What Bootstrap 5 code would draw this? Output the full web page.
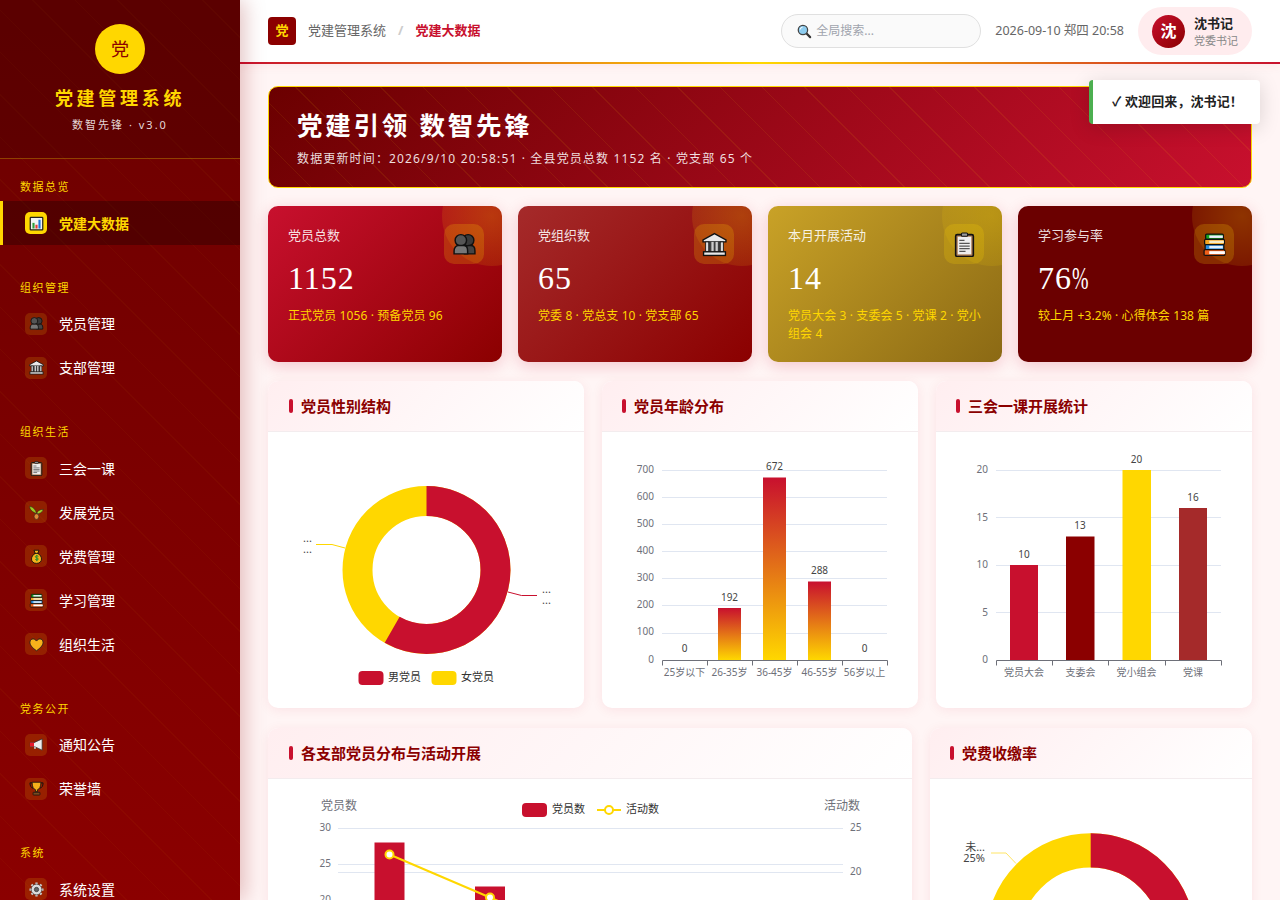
<!DOCTYPE html>
<html lang="zh-CN">
<head>
<meta charset="utf-8">
<title>党建管理系统</title>
<link href="https://cdn.jsdelivr.net/npm/bootstrap@5.3.0/dist/css/bootstrap.min.css" rel="stylesheet">
<script src="https://cdn.jsdelivr.net/npm/bootstrap@5.3.0/dist/js/bootstrap.bundle.min.js"></script>
<style>
html,body{height:900px;overflow:hidden}
body{font-family:"Noto Sans","Noto Sans CJK SC",sans-serif;background:#fff5f5;color:#333}
.shell{height:900px}
.side{width:240px;flex:none;height:900px;overflow:hidden;z-index:3;color:#fff;box-shadow:4px 0 20px rgba(139,0,0,.25);
 background:repeating-linear-gradient(45deg,transparent 0 29px,rgba(255,215,0,.03) 29px 30px),linear-gradient(180deg,#6b0000,#8b0000)}
.side-head{height:159px;background:rgba(0,0,0,.15);border-bottom:1px solid rgba(255,215,0,.3);padding-top:24px}
.side-logo{width:50px;height:50px;background:#ffd700;color:#8b0000;font-size:18px}
.side-title{color:#ffd700;font-size:18px;font-weight:700;letter-spacing:3.7px;margin-top:11px;line-height:26px}
.side-sub{color:rgba(255,255,255,.85);font-size:11px;letter-spacing:2px;margin-top:6px;line-height:16px}
.side-nav{padding-top:20px}
.side-group{margin-bottom:34.5px}
.side-label{color:#ffd700;font-size:11px;letter-spacing:1.5px;line-height:16.5px;padding-left:20px;margin-bottom:5.5px}
.side-link{height:44px;padding:0 0 0 22px;gap:12px;color:#fff;font-size:14px;border-left:3px solid transparent;margin:0}
.side-link:hover{color:#fff}
.side-link.now{color:#ffd700;font-weight:700;background:rgba(0,0,0,.28);border-left-color:#ffd700}
.side-ico{width:22px;height:22px;border-radius:5px;background:rgba(255,215,0,.15)}
.side-link.now .side-ico{background:#ffd700}
.side-ico svg{width:15px;height:15px}
.page{min-width:0;height:900px;overflow:hidden}
.topbar{height:64px;flex:none;padding:0 28px;background:#fff;border-bottom:2px solid;border-image:linear-gradient(90deg,#c8102e,#ffd700,#c8102e) 1;box-shadow:0 2px 10px rgba(200,16,46,.06);z-index:2}
.top-logo{width:28px;height:28px;background:#8b0000;color:#ffd700;font-size:13px;border-radius:4px}
.crumbs{font-size:13px;--bs-breadcrumb-margin-bottom:2px;--bs-breadcrumb-divider-color:#ccc;--bs-breadcrumb-item-padding-x:12px;--bs-breadcrumb-item-active-color:#c8102e;line-height:20px;color:#666}
.search-box{width:200px;height:34px;border-radius:17px;background:#fafafa;border:1px solid #e0e0e0;padding:0 15px;gap:4px}
.search-box svg{width:15px;height:15px;flex:none}
.search-box input{border:0;background:transparent;padding:0;font-size:12px;box-shadow:none;min-width:0}
.search-box input::placeholder{color:#a0a4ad;opacity:1}
.top-date{font-size:12.5px;color:#666;margin:0 14px}
.who{height:48px;width:114px;background:#ffecee;border-radius:24px;padding-left:14px;gap:9px}
.who-ava{width:33px;height:33px;background:linear-gradient(135deg,#c8102e,#8b0000);color:#fff;font-size:16px;font-weight:700}
.who-name{font-size:13px;font-weight:700;color:#222;line-height:18px}
.who-role{font-size:11px;color:#888;line-height:16px;margin-top:1px}
.flash{position:absolute;top:80px;right:20px;width:171px;height:44px;background:#fff;border-left:4px solid #4caf50;border-radius:4px;box-shadow:0 4px 20px rgba(0,0,0,.15);font-size:13px;font-weight:700;color:#222;padding-left:19px;letter-spacing:.1px;z-index:5}
.board{padding:22px 28px 0}
.hero{height:102px;border:1px solid #ffd700;border-radius:10px;padding:0 28px;margin-bottom:18px;color:#fff;
 background:repeating-linear-gradient(45deg,transparent 0 29px,rgba(255,215,0,.08) 29px 30px),linear-gradient(135deg,#6b0000,#c8102e)}
.hero-title{font-size:25.5px;font-weight:700;letter-spacing:2.75px;line-height:34px;margin:1px 0 8px}
.hero-sub{font-size:12px;letter-spacing:1.15px;color:rgba(255,255,255,.88);line-height:18px}
.kpis{margin-bottom:19px}
.kpi{height:156px;border:0;border-radius:10px;padding:19px 20px 20px;color:#fff;overflow:hidden;box-shadow:0 4px 16px rgba(200,16,46,.2)}
.kpi::before{content:"";position:absolute;top:-40px;right:-40px;width:100px;height:100px;border-radius:50%;background:radial-gradient(circle,rgba(255,215,0,.24),rgba(255,215,0,.06))}
.kpi-a{background:linear-gradient(135deg,#c8102e,#8b0000)}
.kpi-b{background:linear-gradient(135deg,#a52a2a,#8b0000)}
.kpi-c{background:linear-gradient(135deg,#c9a227,#8b6914)}
.kpi-d{background:#6b0000}
.kpi-label{font-size:13px;color:rgba(255,255,255,.88);line-height:20px}
.kpi-num{font-family:"Liberation Serif",serif;font-size:32px;line-height:40px;margin:13px 0 9px;letter-spacing:1px}
.kpi-pct{display:inline-block;transform:scaleX(.62);transform-origin:left center;letter-spacing:0}
.kpi-note{font-size:12px;color:#ffd700;line-height:18px;width:196px;letter-spacing:.1px}
.kpi-ico{position:absolute;top:18px;right:18px;width:40px;height:40px;border-radius:10px;background:rgba(255,215,0,.2)}
.kpi-ico svg{width:25px;height:25px}
.panels{display:grid;gap:18px}
.panels-3{grid-template-columns:repeat(3,1fr);margin-bottom:20px}
.panels-2{grid-template-columns:2fr 1fr}
.panel{border:0;border-radius:10px;overflow:hidden;box-shadow:0 2px 12px rgba(200,16,46,.08);background:#fff}
.panel-top{background:linear-gradient(135deg,#ffeef0,#fff);border-bottom:1px solid #f3ecee;padding:0 20px;height:51px;font-size:15px;font-weight:700;color:#8b0000;border-radius:0;gap:8px}
.panel:first-child .panel-top{padding-left:21px}
.panel-top::before{content:"";width:4px;height:14px;border-radius:2px;background:#c8102e}
.panel svg{display:block}
.tx-axis{font-size:10px;fill:#6e7079}
.tx-val{font-size:10px;fill:#444}
.tx-leg{font-size:11px;fill:#333}
.tx-name{font-size:12px;fill:#6e7079}
.tx-pie{font-size:11px;fill:#444}
</style>
</head>
<body>
<svg width="0" height="0" class="position-absolute">
<defs>
<linearGradient id="hotbar" x1="0" y1="0" x2="0" y2="1"><stop offset="0" stop-color="#c8102e"/><stop offset="1" stop-color="#ffd700"/></linearGradient>
<symbol id="i-chart" viewBox="0 0 24 24"><rect x="2" y="2" width="20" height="20" rx="1" fill="#f1f3f4" stroke="#222" stroke-width="2"/><rect x="5.500" y="11" width="3.400" height="9" fill="#2e9e3f"/><rect x="10.300" y="14" width="3.400" height="6" fill="#e53935"/><rect x="15.100" y="6" width="3.400" height="14" fill="#1e73d8"/></symbol>
<symbol id="i-people" viewBox="0 0 24 24"><circle cx="15.500" cy="8" r="5.500" fill="#3a3a3a" stroke="#111" stroke-width="1.400"/><circle cx="8.500" cy="8" r="5.500" fill="#555" stroke="#111" stroke-width="1.400"/><path d="M12 21v-3c0-3 2-5 4-5h2c2.500 0 4 2 4 5v3z" fill="#444" stroke="#111" stroke-width="1.400"/><path d="M2 21v-3c0-3 2-5 4-5h5c2.500 0 4 2 4 5v3z" fill="#777" stroke="#111" stroke-width="1.400"/></symbol>
<symbol id="i-bank" viewBox="0 0 24 24"><path d="M12 1.500 23 7.500V9.500H1V7.500z" fill="#e8e8e8" stroke="#111" stroke-width="1.300"/><rect x="4" y="9.500" width="16" height="9.500" fill="#3d3d3d"/><rect x="3.500" y="9.500" width="3" height="9.500" fill="#ddd" stroke="#111" stroke-width=".8"/><rect x="9" y="9.500" width="2.200" height="9.500" fill="#ccc"/><rect x="13" y="9.500" width="2.200" height="9.500" fill="#ccc"/><rect x="17.500" y="9.500" width="3" height="9.500" fill="#ddd" stroke="#111" stroke-width=".8"/><rect x="1.500" y="19" width="21" height="3.500" fill="#e8e8e8" stroke="#111" stroke-width="1.300"/></symbol>
<symbol id="i-clip" viewBox="0 0 24 24"><rect x="3.500" y="2.500" width="17" height="21" rx="1.500" fill="#a9784f" stroke="#111" stroke-width="1.500"/><rect x="5.500" y="4.500" width="13" height="17" fill="#eee"/><rect x="9" y="1" width="6" height="3" rx="1" fill="#999" stroke="#111"/><path d="M7 8h5M7 11h10M7 13.500h10M7 16h10M7 18.500h6" stroke="#555" stroke-width="1.200"/></symbol>
<symbol id="i-sprout" viewBox="0 0 24 24"><path d="M12 14C11 8 7 3 1 2c0 6 5 9 11 12z" fill="#9ccc20" stroke="#222" stroke-width=".8"/><path d="M12 14c1-4 5-7 11-7-2 5-6 7-11 7z" fill="#a6d62b" stroke="#222" stroke-width=".8"/><ellipse cx="12" cy="18.500" rx="3.800" ry="4.500" fill="#e08a38" stroke="#222" stroke-width=".9"/></symbol>
<symbol id="i-bag" viewBox="0 0 24 24"><path d="M8 2h8l-2 5c4 2 6 6 6 9 0 4-3 7-8 7s-8-3-8-7c0-3 2-7 6-9z" fill="#f6b21b" stroke="#111" stroke-width="1.400"/><path d="M9 7h6" stroke="#111" stroke-width="1.500"/><path d="M15 12c-1-1.500-5-1.500-5 .5s5 1.500 5 3.500-4 2-5 .5M12.500 9.500v10" stroke="#1b8a2f" stroke-width="1.500" fill="none"/></symbol>
<symbol id="i-books" viewBox="0 0 24 24"><rect x="3.500" y="2" width="17" height="5" rx="1" fill="#19a81f" stroke="#111" stroke-width="1.200"/><rect x="7" y="3.300" width="13" height="2.400" fill="#eef"/><rect x="2.500" y="7" width="19" height="5" rx="1" fill="#f5a623" stroke="#111" stroke-width="1.200"/><rect x="7" y="8.300" width="14" height="2.400" fill="#f6ecc8"/><rect x="3" y="12" width="18" height="5" rx="1" fill="#2b8fe0" stroke="#111" stroke-width="1.200"/><rect x="7" y="13.300" width="13" height="2.400" fill="#e6f2fb"/><rect x="2" y="17" width="20" height="5.500" rx="1" fill="#f0601a" stroke="#111" stroke-width="1.200"/><rect x="7" y="18.400" width="15" height="2.800" fill="#fff"/></symbol>
<symbol id="i-heart" viewBox="0 0 24 24"><path d="M12 22C5 17 1.500 13 1.500 8.500 1.500 5 4 3 6.500 3c2.500 0 4 1.500 5.500 3.500C13.500 4.500 15 3 17.500 3 20 3 22.500 5 22.500 8.500 22.500 13 19 17 12 22z" fill="#f6b21b" stroke="#222" stroke-width="1.400"/></symbol>
<symbol id="i-horn" viewBox="0 0 24 24"><path d="M2 9h6l13-6v18L8 15H2z" fill="#eee" stroke="#333" stroke-width="1.200"/><rect x="1.500" y="9" width="6.500" height="6" fill="#e8192c"/><rect x="8" y="15" width="3" height="4" fill="#bbb"/></symbol>
<symbol id="i-cup" viewBox="0 0 24 24"><path d="M5 3H1.500c0 5 2 8 5 8.500M19 3h3.500c0 5-2 8-5 8.500" fill="none" stroke="#111" stroke-width="1.500"/><path d="M5 2h14c0 7-2 11-5.500 12v3h-3v-3C7 13 5 9 5 2z" fill="#f6b21b" stroke="#111" stroke-width="1.300"/><rect x="6.500" y="18" width="11" height="4.500" rx="1" fill="#7a4a1f" stroke="#111" stroke-width="1.200"/></symbol>
<symbol id="i-gear" viewBox="0 0 24 24"><path d="M12 .800v22.400M.800 12h22.400M4 4l16 16M20 4 4 20" stroke="#ccc" stroke-width="3.600"/><circle cx="12" cy="12" r="8.500" fill="#ddd" stroke="#333" stroke-width="1"/><circle cx="12" cy="12" r="3.500" fill="#666" stroke="#222"/></symbol>
<symbol id="i-glass" viewBox="0 0 24 24"><path d="M14.500 14.500 21 21" stroke="#333" stroke-width="3.500" stroke-linecap="round"/><circle cx="9.500" cy="9.500" r="7.500" fill="#8ecdf0" stroke="#444" stroke-width="2"/><path d="M5 9a4.500 4.500 0 0 1 4-4" stroke="#fff" stroke-width="1.500" fill="none"/></symbol>
</defs>
</svg>

<div class="shell d-flex position-relative">
 <aside class="side">
  <div class="side-head text-center">
   <div class="side-logo rounded-circle d-flex align-items-center justify-content-center mx-auto">党</div>
   <div class="side-title">党建管理系统</div>
   <div class="side-sub">数智先锋 · v3.0</div>
  </div>
  <nav class="side-nav">
   <div class="side-group">
    <div class="side-label">数据总览</div>
    <div class="nav flex-column">
     <a class="nav-link side-link now d-flex align-items-center" href="#"><span class="side-ico d-flex align-items-center justify-content-center"><svg><use href="#i-chart"/></svg></span>党建大数据</a>
    </div>
   </div>
   <div class="side-group">
    <div class="side-label">组织管理</div>
    <div class="nav flex-column">
     <a class="nav-link side-link d-flex align-items-center" href="#"><span class="side-ico d-flex align-items-center justify-content-center"><svg><use href="#i-people"/></svg></span>党员管理</a>
     <a class="nav-link side-link d-flex align-items-center" href="#"><span class="side-ico d-flex align-items-center justify-content-center"><svg><use href="#i-bank"/></svg></span>支部管理</a>
    </div>
   </div>
   <div class="side-group">
    <div class="side-label">组织生活</div>
    <div class="nav flex-column">
     <a class="nav-link side-link d-flex align-items-center" href="#"><span class="side-ico d-flex align-items-center justify-content-center"><svg><use href="#i-clip"/></svg></span>三会一课</a>
     <a class="nav-link side-link d-flex align-items-center" href="#"><span class="side-ico d-flex align-items-center justify-content-center"><svg><use href="#i-sprout"/></svg></span>发展党员</a>
     <a class="nav-link side-link d-flex align-items-center" href="#"><span class="side-ico d-flex align-items-center justify-content-center"><svg><use href="#i-bag"/></svg></span>党费管理</a>
     <a class="nav-link side-link d-flex align-items-center" href="#"><span class="side-ico d-flex align-items-center justify-content-center"><svg><use href="#i-books"/></svg></span>学习管理</a>
     <a class="nav-link side-link d-flex align-items-center" href="#"><span class="side-ico d-flex align-items-center justify-content-center"><svg><use href="#i-heart"/></svg></span>组织生活</a>
    </div>
   </div>
   <div class="side-group">
    <div class="side-label">党务公开</div>
    <div class="nav flex-column">
     <a class="nav-link side-link d-flex align-items-center" href="#"><span class="side-ico d-flex align-items-center justify-content-center"><svg><use href="#i-horn"/></svg></span>通知公告</a>
     <a class="nav-link side-link d-flex align-items-center" href="#"><span class="side-ico d-flex align-items-center justify-content-center"><svg><use href="#i-cup"/></svg></span>荣誉墙</a>
    </div>
   </div>
   <div class="side-group">
    <div class="side-label">系统</div>
    <div class="nav flex-column">
     <a class="nav-link side-link d-flex align-items-center" href="#"><span class="side-ico d-flex align-items-center justify-content-center"><svg><use href="#i-gear"/></svg></span>系统设置</a>
    </div>
   </div>
  </nav>
 </aside>

 <div class="page flex-grow-1 d-flex flex-column">
  <header class="topbar d-flex align-items-center justify-content-between">
   <div class="d-flex align-items-center gap-2">
    <span class="top-logo d-flex align-items-center justify-content-center fw-bold me-1">党</span>
    <ol class="breadcrumb crumbs">
     <li class="breadcrumb-item">党建管理系统</li>
     <li class="breadcrumb-item active fw-bold">党建大数据</li>
    </ol>
   </div>
   <div class="d-flex align-items-center">
    <label class="search-box d-flex align-items-center"><svg><use href="#i-glass"/></svg><input class="form-control" placeholder="全局搜索..."></label>
    <span class="top-date">2026-09-10 郑四 20:58</span>
    <div class="who d-flex align-items-center">
     <span class="who-ava rounded-circle d-flex align-items-center justify-content-center flex-none">沈</span>
     <div><div class="who-name">沈书记</div><div class="who-role">党委书记</div></div>
    </div>
   </div>
  </header>

  <main class="board flex-grow-1">
   <section class="hero d-flex flex-column justify-content-center">
    <div class="hero-title">党建引领 数智先锋</div>
    <div class="hero-sub">数据更新时间：2026/9/10 20:58:51 · 全县党员总数 1152 名 · 党支部 65 个</div>
   </section>

   <div class="row row-cols-4 g-3 kpis">
    <div class="col"><div class="card kpi kpi-a position-relative">
     <div class="kpi-label">党员总数</div><div class="kpi-num">1152</div><div class="kpi-note">正式党员 1056 · 预备党员 96</div>
     <span class="kpi-ico d-flex align-items-center justify-content-center"><svg><use href="#i-people"/></svg></span></div></div>
    <div class="col"><div class="card kpi kpi-b position-relative">
     <div class="kpi-label">党组织数</div><div class="kpi-num">65</div><div class="kpi-note">党委 8 · 党总支 10 · 党支部 65</div>
     <span class="kpi-ico d-flex align-items-center justify-content-center"><svg><use href="#i-bank"/></svg></span></div></div>
    <div class="col"><div class="card kpi kpi-c position-relative">
     <div class="kpi-label">本月开展活动</div><div class="kpi-num">14</div><div class="kpi-note">党员大会 3 · 支委会 5 · 党课 2 · 党小组会 4</div>
     <span class="kpi-ico d-flex align-items-center justify-content-center"><svg><use href="#i-clip"/></svg></span></div></div>
    <div class="col"><div class="card kpi kpi-d position-relative">
     <div class="kpi-label">学习参与率</div><div class="kpi-num">76<span class="kpi-pct">%</span></div><div class="kpi-note">较上月 +3.2% · 心得体会 138 篇</div>
     <span class="kpi-ico d-flex align-items-center justify-content-center"><svg><use href="#i-books"/></svg></span></div></div>
   </div>

   <div class="panels panels-3">
    <div class="card panel">
     <div class="card-header panel-top d-flex align-items-center">党员性别结构</div>
     <svg viewBox="268 432 316 276" width="316" height="276">
      <g fill="none" stroke-width="30" transform="rotate(-90 426.500 570)">
       <circle cx="426.500" cy="570" r="69" stroke="#ffd700"/>
       <circle cx="426.500" cy="570" r="69" stroke="#c8102e" pathLength="100" stroke-dasharray="58.300 100"/>
      </g>
      <path d="M345 548 332 544.500H316" fill="none" stroke="#ffd700"/>
      <path d="M508 592 521.500 595.500H537" fill="none" stroke="#c8102e"/>
      <text class="tx-pie"><tspan x="303" y="542">...</tspan><tspan x="303" y="553">...</tspan></text>
      <text class="tx-pie"><tspan x="542" y="593">...</tspan><tspan x="542" y="604">...</tspan></text>
      <rect x="358.500" y="671" width="25" height="14" rx="4" fill="#c8102e"/><text class="tx-leg" x="388" y="681">男党员</text>
      <rect x="431.500" y="671" width="25" height="14" rx="4" fill="#ffd700"/><text class="tx-leg" x="461" y="681">女党员</text>
     </svg>
    </div>
    <div class="card panel">
     <div class="card-header panel-top d-flex align-items-center">党员年龄分布</div>
     <svg viewBox="602 432 316 276" width="316" height="276">
      <path d="M662 470.500H887M662 497.500H887M662 524.500H887M662 551.500H887M662 578.500H887M662 605.500H887M662 633.500H887" stroke="#e0e6f1" fill="none"/>
      <g class="tx-axis" text-anchor="end"><text x="654" y="473">700</text><text x="654" y="500">600</text><text x="654" y="527">500</text><text x="654" y="554">400</text><text x="654" y="581">300</text><text x="654" y="608">200</text><text x="654" y="635">100</text><text x="654" y="663">0</text></g>
      <rect x="718" y="608" width="23" height="52" fill="url(#hotbar)"/>
      <rect x="763" y="477.500" width="23" height="182.500" fill="url(#hotbar)"/>
      <rect x="808" y="581.500" width="23" height="78.500" fill="url(#hotbar)"/>
      <path d="M662.500 665.500V660.500H887.500V665.500M707.500 660.500V665.500M752.500 660.500V665.500M797.500 660.500V665.500M842.500 660.500V665.500" stroke="#6e7079" fill="none"/>
      <g class="tx-val" text-anchor="middle"><text x="684.500" y="652">0</text><text x="729.500" y="601">192</text><text x="774.500" y="470">672</text><text x="819.500" y="574">288</text><text x="864.500" y="652">0</text></g>
      <g class="tx-axis" text-anchor="middle"><text x="684.500" y="676">25岁以下</text><text x="729.500" y="676">26-35岁</text><text x="774.500" y="676">36-45岁</text><text x="819.500" y="676">46-55岁</text><text x="864.500" y="676">56岁以上</text></g>
     </svg>
    </div>
    <div class="card panel">
     <div class="card-header panel-top d-flex align-items-center">三会一课开展统计</div>
     <svg viewBox="936 432 316 276" width="316" height="276">
      <path d="M996 470.500H1221M996 517.500H1221M996 565.500H1221M996 612.500H1221" stroke="#e0e6f1" fill="none"/>
      <g class="tx-axis" text-anchor="end"><text x="988" y="473">20</text><text x="988" y="520.500">15</text><text x="988" y="568">10</text><text x="988" y="615.500">5</text><text x="988" y="663">0</text></g>
      <rect x="1010" y="565" width="28" height="95" fill="#c8102e"/>
      <rect x="1066" y="536.500" width="28.500" height="123.500" fill="#8b0000"/>
      <rect x="1122.500" y="470" width="28.500" height="190" fill="#ffd700"/>
      <rect x="1179" y="508" width="28" height="152" fill="#a52a2a"/>
      <path d="M996.500 665.500V660.500H1221.500V665.500M1052.500 660.500V665.500M1108.500 660.500V665.500M1165.500 660.500V665.500" stroke="#6e7079" fill="none"/>
      <g class="tx-val" text-anchor="middle"><text x="1024" y="558">10</text><text x="1080" y="529">13</text><text x="1136.500" y="463">20</text><text x="1193" y="501">16</text></g>
      <g class="tx-axis" text-anchor="middle"><text x="1024" y="676">党员大会</text><text x="1080.500" y="676">支委会</text><text x="1136.500" y="676">党小组会</text><text x="1193" y="676">党课</text></g>
     </svg>
    </div>
   </div>

   <div class="panels panels-2">
    <div class="card panel">
     <div class="card-header panel-top d-flex align-items-center">各支部党员分布与活动开展</div>
     <svg viewBox="268 779 644 300" width="644" height="300">
      <text class="tx-name" x="321" y="810">党员数</text>
      <text class="tx-name" x="824" y="810">活动数</text>
      <rect x="522" y="803" width="25" height="14" rx="4" fill="#c8102e"/><text class="tx-leg" x="552" y="813">党员数</text>
      <path d="M597 810H621" stroke="#ffd700" stroke-width="2"/><circle cx="609" cy="810" r="4" fill="#fff" stroke="#ffd700" stroke-width="2"/><text class="tx-leg" x="626" y="813">活动数</text>
      <path d="M338 828.500H843M338 864.500H843M338 872.500H843M338 901.500H843" stroke="#e0e6f1" fill="none"/>
      <g class="tx-axis" text-anchor="end"><text x="331" y="831">30</text><text x="331" y="867">25</text><text x="331" y="903">20</text></g>
      <g class="tx-axis"><text x="850" y="831">25</text><text x="850" y="875">20</text></g>
      <rect x="374.500" y="842.500" width="30" height="200" fill="#c8102e"/>
      <rect x="475" y="886.500" width="30" height="160" fill="#c8102e"/>
      <path d="M389.500 854.500 490 897.500 590 940" fill="none" stroke="#ffd700" stroke-width="2"/>
      <circle cx="389.500" cy="854.500" r="4" fill="#fff" stroke="#ffd700" stroke-width="2"/>
      <circle cx="490" cy="897.500" r="4" fill="#fff" stroke="#ffd700" stroke-width="2"/>
     </svg>
    </div>
    <div class="card panel">
     <div class="card-header panel-top d-flex align-items-center">党费收缴率</div>
     <svg viewBox="930 779 322 300" width="322" height="300">
      <g fill="none" stroke-width="34.400" transform="rotate(-90 1090.700 938)">
       <circle cx="1090.700" cy="938" r="87.600" stroke="#ffd700"/>
       <circle cx="1090.700" cy="938" r="87.600" stroke="#c8102e" pathLength="100" stroke-dasharray="75 100"/>
      </g>
      <path d="M1016 863.500 1006 853H991" fill="none" stroke="#ffe566"/>
      <text class="tx-pie" text-anchor="end"><tspan x="985" y="851">未...</tspan><tspan x="985" y="862">25%</tspan></text>
     </svg>
    </div>
   </div>
  </main>
 </div>

 <div class="flash d-flex align-items-center">✓ 欢迎回来，沈书记！</div>
</div>
</body>
</html>
